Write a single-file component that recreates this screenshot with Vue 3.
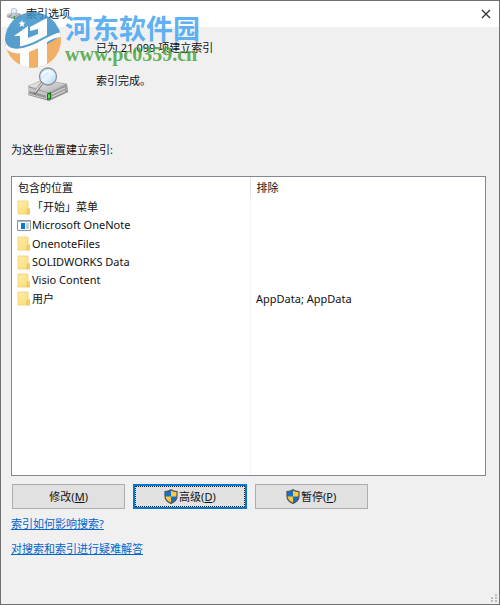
<script setup>
const locations = [
  { name: '「开始」菜单', icon: 'folder', excluded: '' },
  { name: 'Microsoft OneNote', icon: 'app', excluded: '' },
  { name: 'OnenoteFiles', icon: 'folder', excluded: '' },
  { name: 'SOLIDWORKS Data', icon: 'folder', excluded: '' },
  { name: 'Visio Content', icon: 'folder', excluded: '' },
  { name: '用户', icon: 'folder', excluded: 'AppData; AppData' },
]
const actions = [
  { label: '修改', key: 'M', shield: false, active: false },
  { label: '高级', key: 'D', shield: true, active: true },
  { label: '暂停', key: 'P', shield: true, active: false },
]
</script>

<template>
  <main class="window">
    <svg class="defs" aria-hidden="true">
      <defs>
        <linearGradient id="folderFill" x1="0" y1="0" x2="1" y2="1">
          <stop offset="0" stop-color="#ffedaa" />
          <stop offset="1" stop-color="#fbdb78" />
        </linearGradient>
        <linearGradient id="metal" x1="0" y1="0" x2="1" y2="1">
          <stop offset="0" stop-color="#f4f4f4" />
          <stop offset="1" stop-color="#a9a9a9" />
        </linearGradient>
        <linearGradient id="glass" x1="0" y1="0" x2="1" y2="1">
          <stop offset="0" stop-color="#b5d8f6" />
          <stop offset="0.5" stop-color="#e8f5ff" />
          <stop offset="1" stop-color="#a4cdf1" />
        </linearGradient>
        <symbol id="drive" viewBox="0 0 42 36">
          <path d="M1 20 15 13 40 17 41 25 22 34 1 28Z" fill="#888" />
          <path d="M1 19 16 13 40 17 22 26Z" fill="url(#metal)" stroke="#aaa" stroke-width="0.6" />
          <path d="M1 20 22 26.5V33L1 27.500Z" fill="#c6c6c6" />
          <path d="M2 24 19 28.500V31L2 26.500Z" fill="#969696" />
          <path d="M22 26.500 40 18V24.500L22 33Z" fill="#a0a0a0" />
          <path d="M25 27 38 21M25 30 38 24" stroke="#ddd" stroke-width="1" />
          <path d="M20 26.500 24 25V32L20 33Z" fill="#176d20" />
          <path d="M21 27.500 23 27V31L21 31.500Z" fill="#4fe346" />
          <path d="M15 16 8 26" stroke="#777" stroke-width="3" stroke-linecap="round" />
          <path d="M15 16 8 25" stroke="#ddd" stroke-width="1.300" stroke-linecap="round" />
          <circle cx="21" cy="9.500" r="8.500" fill="url(#glass)" stroke="#8b9298" stroke-width="1.300" />
          <path d="M15 9C16 5 20 3 24 5" fill="none" stroke="#fff" stroke-width="1.500" />
        </symbol>
      </defs>
    </svg>

    <header class="titlebar">
      <svg class="title-icon"><use href="#drive" /></svg>
      <h1>索引选项</h1>
      <button class="close" type="button" aria-label="关闭">
        <svg viewBox="0 0 10 10"><path d="M1 1 9 9M9 1 1 9" stroke="#333" stroke-width="1.300" /></svg>
      </button>
    </header>

    <section class="content">
      <div class="status">
        <svg class="status-icon"><use href="#drive" /></svg>
        <div class="status-text">
          <p>已为 21,099 项建立索引</p>
          <p>索引完成。</p>
        </div>
      </div>

      <h2 id="locations-label">为这些位置建立索引:</h2>

      <div class="list">
        <table aria-labelledby="locations-label">
          <thead>
            <tr><th>包含的位置</th><th>排除</th></tr>
          </thead>
          <tbody>
            <tr v-for="item in locations" :key="item.name">
              <td>
                <span class="name">
                  <svg v-if="item.icon === 'folder'" viewBox="0 0 14 15">
                    <path d="M1 1H11V9L12 10V14H1Z" fill="url(#folderFill)" stroke="#f1d16c" stroke-width="0.800" />
                    <path d="M10 14V9.500L12.500 8.500V14Z" fill="#f6d262" stroke="#e6bd48" stroke-width="0.600" />
                  </svg>
                  <svg v-else viewBox="0 0 14 15">
                    <path d="M0.500 2.500H13.500V12.500H0.500Z" fill="#fff" stroke="#8d979f" />
                    <path d="M1 3.500H13" stroke="#b4bdc4" />
                    <path d="M4 5H8V11H4Z" fill="#0878d4" />
                    <path d="M9 6H12M9 8H12M9 10H12" stroke="#8da1b2" />
                  </svg>
                  {{ item.name }}
                </span>
              </td>
              <td>{{ item.excluded }}</td>
            </tr>
          </tbody>
        </table>
      </div>

      <div class="actions">
        <button v-for="action in actions" :key="action.key" type="button" :class="{ active: action.active }">
          <svg v-if="action.shield" viewBox="0 0 14 15">
            <path d="M7 0.700C9 2.200 11 2.500 13 2.500V7C13 10.500 10.500 13 7 14.400C3.500 13 1 10.500 1 7V2.500C3 2.500 5 2.200 7 0.700Z" fill="#1470cd" />
            <path d="M7 1C9 2.300 11 2.500 13 2.500V7.500H7Z" fill="#ffc83d" />
            <path d="M1 7.500H7V14.200C3.500 13 1 10.500 1 7.500Z" fill="#ffc83d" />
            <path d="M7 0.700C9 2.200 11 2.500 13 2.500V7C13 10.500 10.500 13 7 14.400C3.500 13 1 10.500 1 7V2.500C3 2.500 5 2.200 7 0.700Z" fill="none" stroke="#4c545b" stroke-width="1.200" />
          </svg>
          <span>{{ action.label }}(<u>{{ action.key }}</u>)</span>
        </button>
      </div>

      <nav class="links">
        <a href="#search">索引如何影响搜索?</a>
        <a href="#troubleshoot">对搜索和索引进行疑难解答</a>
      </nav>
    </section>

    <div class="watermark">
      <svg viewBox="0 0 58 58" aria-hidden="true">
        <defs><clipPath id="disc"><circle cx="29" cy="29" r="28" /></clipPath></defs>
        <g clip-path="url(#disc)">
          <path d="M0 0H58V26C42 34 28 44 0 36Z" fill="#3c91c8" />
          <path d="M0 36C26 46 42 34 58 24V58H0Z" fill="#f3a650" />
          <path d="M10 25 24 15V27L34 23V18L26 20V16L43 7V58H34V30L25 34V58H16V25Z" fill="#fff" />
          <path d="M1 29C2 37 12 39 25 35 37 31 46 23 57 21V26C45 27 39 36 25 41 13 44 5 42 1 36Z" fill="#fff" />
          <path d="M3 31C5 38 15 38 25 34 37 30 46 22 57 20" fill="none" stroke="#3c91c8" stroke-width="2" />
        </g>
        <path d="M18 9 19 11.500 21.500 11.500 19.500 13.200 20.300 16 18 14.400 15.700 16 16.500 13.200 14.500 11.500 17 11.500Z" fill="#fff" />
      </svg>
      <div>
        <strong>河东软件园</strong>
        <span>www.pc0359.cn</span>
      </div>
    </div>

    <svg class="grip" viewBox="0 0 6 9" aria-hidden="true">
      <path d="M4 0H6V2H4ZM0 3H2V5H0ZM4 3H6V5H4ZM0 6H2V8H0ZM4 6H6V8H4Z" fill="#bcbcbc" />
    </svg>
  </main>
</template>

<style>
body {
  margin: 0;
}
</style>

<style scoped>
.window {
  position: relative;
  box-sizing: border-box;
  min-height: 100vh;
  display: flex;
  flex-direction: column;
  border: 1px solid #707070;
  background: #f0f0f0;
  color: #111;
  font: 11px/18px "Noto Sans", "Noto Sans CJK SC", sans-serif;
}
.defs {
  position: absolute;
  width: 0;
  height: 0;
}
h1, h2, p {
  margin: 0;
  font: inherit;
}
.titlebar {
  display: flex;
  align-items: center;
  height: 26px;
  padding: 0 8px 0 6px;
  gap: 5px;
  background: #fff;
}
.title-icon {
  width: 14px;
  height: 14px;
}
.close {
  display: flex;
  margin-left: auto;
  padding: 0;
  border: 0;
  background: none;
}
.close svg {
  width: 10px;
  height: 10px;
}
.content {
  flex: 1;
  display: flex;
  flex-direction: column;
  padding: 12px 13px 46px 10px;
}
.status {
  display: flex;
  gap: 27px;
  padding-left: 16px;
}
.status-icon {
  width: 42px;
  height: 36px;
  margin-top: 28px;
}
.status-text {
  display: flex;
  flex-direction: column;
  gap: 15px;
}
h2 {
  margin: 38px 0 17px;
}
.list {
  flex: 1;
  border: 1px solid #828790;
  background: linear-gradient(#edf6fd, #edf6fd) 238px 0 / 1px 100% no-repeat #fff;
}
table {
  width: 100%;
  height: 131px;
  table-layout: fixed;
  border-collapse: collapse;
}
th, td {
  padding: 0 6px;
  text-align: left;
  font-weight: 400;
  line-height: 18px;
}
th {
  height: 21px;
}
th:first-child {
  box-sizing: border-box;
  width: 238px;
  border-right: 1px solid #e5e5e5;
}
td:first-child {
  padding-left: 5px;
}
.name {
  display: flex;
  align-items: center;
  gap: 1px;
}
.name svg, .actions svg {
  width: 14px;
  height: 15px;
  flex: none;
}
.actions {
  display: grid;
  grid-template-columns: repeat(3, 24%);
  gap: 8px;
  margin: 8px 2px 0 1px;
}
.actions button {
  display: flex;
  align-items: center;
  justify-content: center;
  gap: 1px;
  height: 25px;
  padding: 0;
  border: 1px solid #adadad;
  background: #e1e1e1;
  color: inherit;
  font: inherit;
}
.actions .active {
  border: 2px solid #0078d7;
  outline: 1px dotted #222;
  outline-offset: -3px;
}
.links {
  display: flex;
  flex-direction: column;
  align-items: flex-start;
  gap: 7px;
  margin-top: 6px;
}
.links a {
  color: #0066cc;
}
.watermark {
  position: absolute;
  top: 10px;
  left: 3px;
  display: flex;
  gap: 3px;
  opacity: 0.85;
  pointer-events: none;
}
.watermark svg {
  width: 58px;
  height: 58px;
}
.watermark div {
  display: flex;
  flex-direction: column;
  gap: 2px;
  padding-top: 3px;
}
.watermark strong {
  color: #45a5f0;
  font: 700 27px/28px "Noto Sans CJK SC", sans-serif;
}
.watermark span {
  color: #4ba540;
  font: 700 20px/20px "Liberation Serif", serif;
}
.grip {
  position: absolute;
  right: 2px;
  bottom: 1px;
  width: 6px;
  height: 9px;
}
</style>
